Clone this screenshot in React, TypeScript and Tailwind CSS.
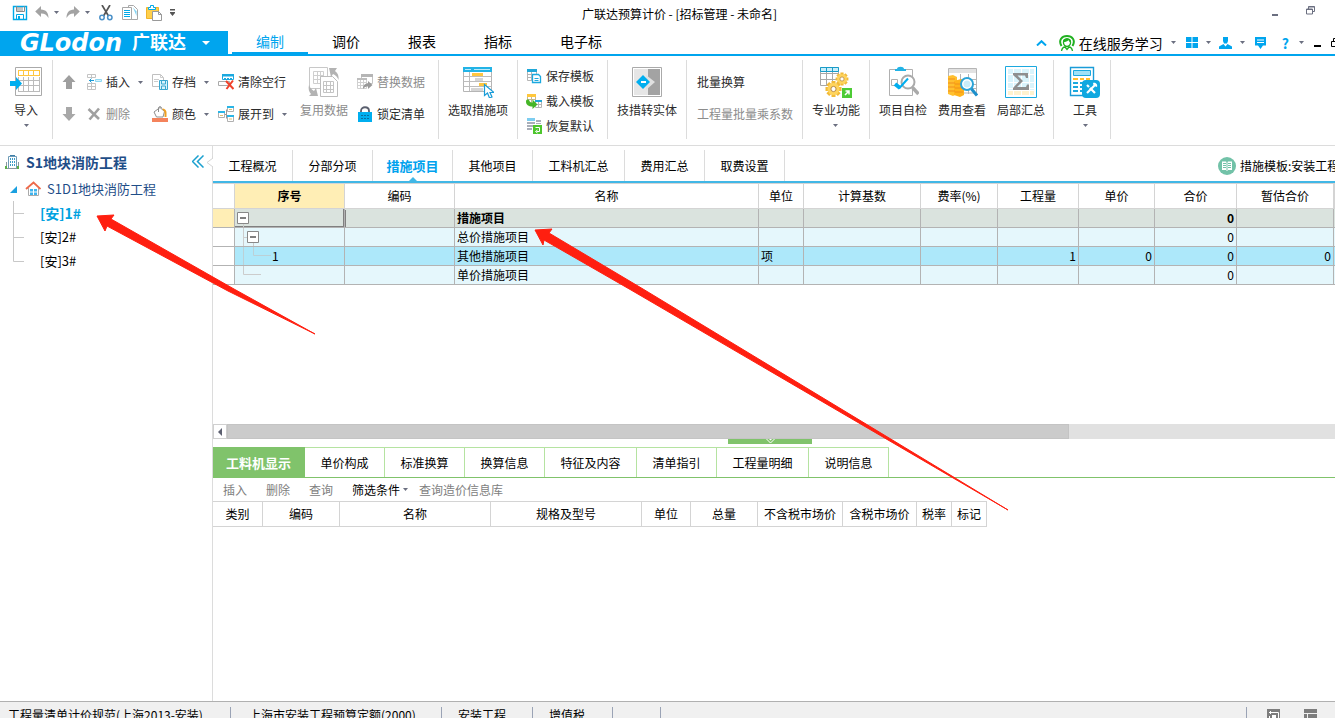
import { useState, type ReactNode } from "react";
import clsx from "clsx";

/* ---------- shared bits ---------- */

function Caret() {
    return (
        <svg width="5" height="3" viewBox="0 0 5 3" className="shrink-0">
            <path d="M0 0h5L2.5 3z" fill="#6b6f80" />
        </svg>
    );
}

function Icon({ size = 16, children }: { size?: number; children: ReactNode }) {
    return (
        <svg width={size} height={size} viewBox={`0 0 ${size} ${size}`} fill="none" className="shrink-0" aria-hidden="true">
            {children}
        </svg>
    );
}

/* ---------- quick access icons ---------- */

const SaveIcon = () => (
    <Icon>
        <path d="M1.5 1.5h13v13h-13z" fill="#fff" stroke="#00a9e8" strokeWidth="1.4" />
        <path d="M4.5 1v5.500h8V1M5 3h6M5 5h6" stroke="#8a8a8a" />
        <path d="M4.500 15V9.500h7V15" stroke="#00a9e8" />
        <path d="M6 11h2v3H6z" fill="#00a9e8" />
    </Icon>
);

const UndoIcon = () => (
    <Icon>
        <path d="M7 1v3.500c5 .2 7.500 3 7.500 8.500C12.500 9.800 10.500 8.500 7 8.600V12L1.200 6.500z" fill="#a3a3a3" />
    </Icon>
);

const RedoIcon = () => (
    <Icon>
        <path d="M9 1v3.500c-5 .2-7.500 3-7.500 8.500C3.500 9.800 5.500 8.500 9 8.600V12l5.800-5.500z" fill="#a3a3a3" />
    </Icon>
);

const CutIcon = () => (
    <Icon>
        <path d="M4 0l6.500 11M12 0L5.500 11" stroke="#555" strokeWidth="1.700" />
        <circle cx="4" cy="12.500" r="2.200" stroke="#4a90c8" strokeWidth="1.500" />
        <circle cx="11.800" cy="12.500" r="2.200" stroke="#4a90c8" strokeWidth="1.500" />
    </Icon>
);

const CopyIcon = () => (
    <Icon>
        <path d="M6.500.5h5l4 4v10h-9z" fill="#fff" stroke="#a8a8a8" />
        <path d="M11 2.500l3.500 4V11z" fill="#7fd2f2" />
        <path d="M.5 2.500h9v12h-9z" fill="#fff" stroke="#a8a8a8" />
        <path d="M2 5.500h6M2 7.500h6M2 9.500h6M2 11.500h6" stroke="#00a9e8" />
    </Icon>
);

const PasteIcon = () => (
    <Icon>
        <path d="M.5 2.500h12v11H.5z" fill="#ffcf4b" stroke="#f0b429" />
        <path d="M2.500 4.500v-2h2v-2h3v2h2v2z" fill="#fff" stroke="#00a9e8" />
        <path d="M6.500 6.500h6l3 3v6h-9z" fill="#fff" stroke="#999" />
        <path d="M12.500 6.500v3h3" stroke="#999" />
    </Icon>
);

/* ---------- ribbon icons, 16px ---------- */

const ArrowUp = () => (
    <Icon>
        <path d="M8 1l6.500 7H11v7H5V8H1.500z" fill="#9f9f9f" />
    </Icon>
);

const ArrowDown = () => (
    <Icon>
        <path d="M8 15l6.500-7H11V1H5v7H1.500z" fill="#a8a8a8" />
    </Icon>
);

const InsertIcon = () => (
    <Icon>
        <path d="M1.500.5h8v3h-8zM5.500.5v3M1.500 9.500h8v6h-8zM5.500 9.500v6M1.500 12.500h8" stroke="#c4c4c4" />
        <path d="M9.500 5.500h6v2h-6z" fill="#d6f3fd" stroke="#8fd8f2" />
        <path d="M3 6.500h5M5.500 4.500L3.500 6.500l2 2" stroke="#1b9ad6" />
    </Icon>
);

const DeleteIcon = () => (
    <Icon>
        <path d="M2.500 3l10.500 10M13 2.500L3.500 13.500" stroke="#a0a0a0" strokeWidth="2.600" />
    </Icon>
);

const ArchiveIcon = () => (
    <Icon>
        <path d="M.5.5h8l3 3v9H.5z" fill="#fff" stroke="#c0c0c0" />
        <path d="M8.500.5v3h3M2 5.500h5M2 7.500h4" stroke="#ccc" />
        <path d="M7.500 6.500h8v9h-8z" fill="#d9f3fc" stroke="#3aa7d0" />
        <path d="M9.500 7v3h4V7M9.500 15v-3h4v3" stroke="#3aa7d0" />
    </Icon>
);

const ColorIcon = () => (
    <Icon>
        <path d="M2 6l6-4.500 4.500 4L11 11H4.500z" fill="#fff" stroke="#8d8d8d" />
        <path d="M6.500 6V2C6.500.2 9.500.2 9.500 2" stroke="#8d8d8d" />
        <path d="M10 2.500c3 0 4.500 2 4.500 4V11h-2V6z" fill="#f0a020" />
        <path d="M0 12h16v4H0z" fill="#f4835c" />
    </Icon>
);

const ClearRowIcon = () => (
    <Icon>
        <path d="M4.500.5h11v5h-11z" fill="#fff" stroke="#1ba9df" />
        <path d="M4 0h12v2.500H4z" fill="#1ba9df" />
        <path d="M6 4.500h2M9 4.500h2M12 4.500h2" stroke="#1ba9df" />
        <path d="M.5 7.500h11v4H.5z" fill="#fff" stroke="#aaa" />
        <path d="M8 7l7.500 8M15 6.500L8.500 15" stroke="#f0412a" strokeWidth="2" />
    </Icon>
);

const ExpandIcon = () => (
    <Icon>
        <path d="M6 8.500h3M8.500 4v8M8.500 3.500H10M8.500 12.500H10" stroke="#999" />
        <path d="M.5 5.500h6v6h-6zM9.500.5h6v5h-6zM9.500 9.500h6v6h-6z" fill="#fff" stroke="#b0b0b0" />
        <path d="M0 5h7v2H0zM9 0h7v2H9zM9 9h7v2H9z" fill="#2ab5e6" />
        <path d="M2 9.500h3M11 3.500h3M11 13h3" stroke="#e0c070" />
    </Icon>
);

const ReplaceIcon = () => (
    <Icon>
        <path d="M4.500.5h11v9h-11z" fill="#fff" stroke="#c4c4c4" />
        <path d="M4 0h12v3H4z" fill="#b5b5b5" />
        <path d="M.5 4.500h9v10h-9zM3.500 4.500v10M6.500 4.500v10M.5 8.500h9M.5 11.500h9" fill="#fff" stroke="#d0d0d0" />
        <path d="M0 4h10v2H0z" fill="#bdbdbd" />
        <path d="M6 15c0-4 2-5.500 5-5.500V7l4.500 4-4.500 4v-2.500c-2 0-3.500.5-5 2.500z" fill="#999" />
    </Icon>
);

const LockIcon = () => (
    <Icon>
        <path d="M4 7V5c0-5 8-5 8 0v2" stroke="#5a5f6e" strokeWidth="1.800" />
        <path d="M1 6h14v10H1z" fill="#00aeef" />
        <path d="M4 9.500h2M7 9.500h2M10 9.500h2M4 12.500h2M7 12.500h2M10 12.500h2" stroke="#0b6fa0" />
    </Icon>
);

const SaveTplIcon = () => (
    <Icon>
        <path d="M1.500 1.500h9v11h-9zM5.500 2v10M1.500 6.500h9M1.500 9.500h9" fill="#fff" stroke="#b5b5b5" />
        <path d="M1 1h10v3H1z" fill="#21a8d8" />
        <path d="M6.500 6.500h6l2 2v6h-8z" fill="#fff" stroke="#1ba9df" strokeWidth="1.300" />
        <path d="M8.500 10.500h4M8.500 12.500h4" stroke="#1ba9df" />
    </Icon>
);

const LoadTplIcon = () => (
    <Icon>
        <path d="M1.500 1.500h8v9h-8zM5.500 2v8M1.500 6.500h8" fill="#fff" stroke="#c8b890" />
        <path d="M1 1h9v3H1z" fill="#ffc73c" />
        <path d="M9.500 7.500h6v7h-6zM12.500 8v6M9.500 11.500h6" fill="#fff" stroke="#b5b5b5" />
        <path d="M9 7h7v2H9z" fill="#21a8d8" />
        <path d="M0 8.500C0 6 3 6 3.500 8c.5 1 1.500 1.500 3 1.500V6.500l5 5-5 4.500v-2.500C2.500 13.500 0 12 0 8.500z" fill="#45b527" />
    </Icon>
);

const RestoreTplIcon = () => (
    <Icon>
        <path d="M1 0h8v3H1z" fill="#7dcdf0" />
        <path d="M1 4h8v2H1zM1 7h6v2H1zM1 10h5v2H1zM10 2h5v2h-5zM10 5h5v1h-5z" fill="#a9aeb8" />
        <path d="M7 7h9v9H7z" fill="#4ec62d" />
        <path d="M9.500 9.500h4v4h-3M11.500 12l-2 1.500 2 1.500" stroke="#fff" />
    </Icon>
);

/* ---------- ribbon icons, 32px ---------- */

const ImportIcon = () => (
    <Icon size={32}>
        <path d="M5.500 1.500h26v28h-26z" fill="#fff" stroke="#aaa" />
        <path d="M8 4.500h22M8 9.500h22M8.500 4v6M13.500 4v6M18.500 4v6M23.500 4v6M29.500 4v6" stroke="#ffc640" />
        <path d="M8 14.500h22M8 19.500h22M8 25.500h22M8.500 11v15M13.500 11v15M18.500 11v15M23.500 11v15M29.500 11v15" stroke="#bbb" />
        <path d="M0 15h6v-4l6 6.500L6 24v-4H0z" fill="#00aeef" />
    </Icon>
);

const ReuseIcon = () => (
    <Icon size={32}>
        <path d="M1.500 1.500h18v21h-18z" fill="#fff" stroke="#c8c8c8" />
        <path d="M5.500 5.500h10v12h-10zM9.500 5.500v12M12.500 5.500v12M5.500 9.500h10M5.500 13.500h10" stroke="#cfcfcf" />
        <path d="M12.500 10.500h12l5 5v15h-17z" fill="#fff" stroke="#bdbdbd" />
        <path d="M15.500 15.500h10v11h-10zM18.500 15.500v11M22.500 15.500v11M15.500 19.500h10M15.500 23.500h10" stroke="#c4c4c4" />
        <path d="M21 2h8l-2 3c3 2 4 5 3.500 9-1-3-3-5-5.500-6l-2 3z" fill="#b3b3b3" />
        <path d="M1 19c1 3 3 5 5 6l2-3 2 8H1l2-2c-2-2-3-5-2-9z" fill="#b3b3b3" />
    </Icon>
);

const PickIcon = () => (
    <Icon size={32}>
        <path d="M1.500 1.500h28v24h-28z" fill="#fff" stroke="#b5b5b5" />
        <path d="M1 1h29v5H1z" fill="#22b3e6" />
        <path d="M3 3.500h6M12 3.500h16" stroke="#bdeafa" />
        <path d="M7.500 6v19M1.500 10.500h28M1.500 15.500h28M1.500 20.500h28" stroke="#bdbdbd" />
        <path d="M10 7h11v3H10zM17 17h8v3h-8z" fill="#ffc640" />
        <path d="M13 12h8v3h-8zM9 22h12v3H9z" fill="#d5d5d5" />
        <path d="M22.500 18.500v11l3-2.500 2 5 2.500-1-2-4.500h4z" fill="#fff" stroke="#1a9cd8" strokeWidth="1.200" />
    </Icon>
);

const SolidIcon = () => (
    <Icon size={32}>
        <path d="M1.500 1.500h29v29h-29z" fill="#fff" stroke="#aaa" />
        <path d="M3 3h14v26H3z" fill="#e6e6e6" />
        <path d="M17 3h12v26H17z" fill="#a3a3a3" />
        <path d="M15 9l9 7-9 8z" fill="#e1e1e1" />
        <path d="M5 16l7-7 7 7-7 7z" fill="#00aeef" />
        <path d="M10 15h5v2h-5z" fill="#fff" />
    </Icon>
);

function Gear({ x, y, s }: { x: number; y: number; s: number }) {
    return (
        <g transform={`translate(${x} ${y}) scale(${s})`}>
            <g stroke="#f2bb38" strokeWidth="4">
                <path d="M0-8V8M-8 0H8M-5.700-5.700L5.700 5.700M-5.700 5.700L5.700-5.700" />
            </g>
            <circle r="6" fill="#ffd45c" />
            <circle r="2.600" fill="#fff" stroke="#b88a4a" />
        </g>
    );
}

const ProIcon = () => (
    <Icon size={32}>
        <path d="M.5 1.500h18v18H.5zM6.500 2v17M12.500 2v17M.5 7.500h18M.5 13.500h18" fill="#fff" stroke="#a8a8a8" />
        <path d="M.5 1.500h18v4H.5zM6.500 2v3M12.500 2v3" fill="#c9effb" stroke="#1a9cc8" />
        <Gear x={22} y={13} s={0.8} />
        <Gear x={13.500} y={23} s={1} />
        <path d="M22 22h10v10H22z" fill="#4dcb35" />
        <path d="M25 29l4-4M25.500 25h3.500v3.500" stroke="#fff" strokeWidth="1.500" />
    </Icon>
);

const CheckIcon = () => (
    <Icon size={32}>
        <path d="M2.500 3.500h23v26h-23z" fill="#fff" stroke="#b0b0b0" />
        <path d="M10 3c0-3 7-3 7 0h2v2H8V3z" fill="#22b3e6" />
        <path d="M4.500 13.500h6v6h-6z" stroke="#b0b0b0" />
        <circle cx="21" cy="16" r="6.500" fill="#fff" stroke="#aaa" strokeWidth="2" />
        <path d="M25.500 21.500l6 6.500" stroke="#aaa" strokeWidth="3.500" />
        <path d="M8 18l5 4" stroke="#00aeef" strokeWidth="4" />
        <path d="M12 22.500l9-10" stroke="#00aeef" strokeWidth="2" />
    </Icon>
);

const FeeIcon = () => (
    <Icon size={32}>
        <path d="M2.500 2.500h28v20h-28zM14.500 8v20M22.500 8v20M14.500 13.500h16M14.500 18.500h16M30.500 22v5h-16" fill="#fff" stroke="#b5b5b5" />
        <path d="M3 3h27v4H3z" fill="#e2e2e2" />
        <path d="M2 10l5-1 4 2v17l-4 2-5-2z" fill="#ffc030" />
        <path d="M8 15l7-2 3 2v14l-4 2-6-2z" fill="#ffb31a" />
        <path d="M2 13h7M2 17h7M2 21h7M2 25h7M9 18h8M9 22h8M9 26h8" stroke="#f08f1c" />
        <circle cx="21" cy="18" r="6" fill="#fff" stroke="#2aa4d8" strokeWidth="2" />
        <circle cx="21" cy="18" r="3.500" fill="#c8edf9" />
        <path d="M25.500 23l5.500 6.500" stroke="#1c8fcb" strokeWidth="3" />
    </Icon>
);

const SumIcon = () => (
    <Icon size={32}>
        <path d="M.5.5h31v31H.5z" fill="#fff" stroke="#1ba9df" />
        <path d="M3 3h26v21H3z" fill="#d9f4fc" />
        <path d="M3 25h26v4H3z" fill="#fff2cf" />
        <path d="M8.500 3v26M16.500 3v26M24.500 3v26M3 8.500h26M3 16.500h26M3 22.500h26" stroke="#fff" />
        <path d="M8 7h15v5h-2l-1-2.500h-7.500L18 15l-6 6h9l1-2.500h2V24H8v-2l6.500-7L8 9z" fill="#8f8f8f" />
    </Icon>
);

const ToolsIcon = () => (
    <Icon size={32}>
        <path d="M1.500 1.500h23v28h-23z" fill="#fff" stroke="#1a9cd8" strokeWidth="1.400" />
        <path d="M4.500 4.500h17v5h-17z" fill="#9fe1f7" stroke="#1ba9df" />
        <path d="M4 17h5M4 21h5M4 25h5M11 17h4M11 21h2M11 25h2" stroke="#1ba9df" strokeWidth="2" />
        <path d="M4 13h5M11 13h4M17 13h4" stroke="#ffbf2e" strokeWidth="2" />
        <rect x="13" y="14" width="18" height="18" rx="4" fill="#10a8e0" />
        <path d="M18 27l8-8" stroke="#fff" strokeWidth="2.200" />
        <path d="M24 17c2-1 5 1 4 4l-2.500-1-1-1z" fill="#fff" />
        <path d="M18 19l2 2M21 22l5 5" stroke="#fff" strokeWidth="2.200" />
    </Icon>
);

/* ---------- ribbon buttons ---------- */

interface ToolProps {
    icon?: ReactNode;
    label: string;
    caret?: boolean;
    disabled?: boolean;
}

function SmallTool({ icon, label, caret, disabled }: ToolProps) {
    return (
        <button disabled={disabled} className={clsx("flex h-full items-center gap-1 whitespace-nowrap", disabled ? "text-[#8c8c8c]" : "text-[#2b2b2b]")}>
            {icon}
            {label}
            {caret && (
                <span className="ml-1 flex">
                    <Caret />
                </span>
            )}
        </button>
    );
}

function BigTool({ icon, label, caret, disabled }: ToolProps) {
    return (
        <button disabled={disabled} className={clsx("flex flex-col items-center whitespace-nowrap pt-1.5", disabled ? "text-[#8c8c8c]" : "text-[#2b2b2b]")}>
            {icon}
            <span className="mt-1 leading-4">{label}</span>
            {caret && (
                <span className="mt-1.5 flex">
                    <Caret />
                </span>
            )}
        </button>
    );
}

function Group({ className, children }: { className: string; children: ReactNode }) {
    return <div className={clsx("mb-1.5 mt-1 flex shrink-0 border-r border-[#dcdcdc]", className)}>{children}</div>;
}

function Pair({ className, children }: { className?: string; children: ReactNode }) {
    return <div className={clsx("mt-1.5 grid h-16 shrink-0 grid-rows-2 justify-start", className)}>{children}</div>;
}

function Ribbon() {
    return (
        <div className="flex h-[90px] shrink-0 overflow-hidden border-b border-[#dcdcdc] leading-4">
            <Group className="w-[53px] justify-center">
                <BigTool icon={<ImportIcon />} label="导入" caret />
            </Group>
            <Group className="w-[386px] pl-2">
                <Pair className="w-[25px]">
                    <button aria-label="上移"><ArrowUp /></button>
                    <button aria-label="下移"><ArrowDown /></button>
                </Pair>
                <Pair className="w-[66px]">
                    <SmallTool icon={<InsertIcon />} label="插入" caret />
                    <SmallTool icon={<DeleteIcon />} label="删除" disabled />
                </Pair>
                <Pair className="w-[66px]">
                    <SmallTool icon={<ArchiveIcon />} label="存档" caret />
                    <SmallTool icon={<ColorIcon />} label="颜色" caret />
                </Pair>
                <Pair className="w-[82px]">
                    <SmallTool icon={<ClearRowIcon />} label="清除空行" />
                    <SmallTool icon={<ExpandIcon />} label="展开到" caret />
                </Pair>
                <BigTool icon={<ReuseIcon />} label="复用数据" disabled />
                <Pair className="ml-[9px]">
                    <SmallTool icon={<ReplaceIcon />} label="替换数据" disabled />
                    <SmallTool icon={<LockIcon />} label="锁定清单" />
                </Pair>
            </Group>
            <Group className="w-[79px] justify-center">
                <BigTool icon={<PickIcon />} label="选取措施项" />
            </Group>
            <Group className="w-[90px] pl-2">
                <div className="mt-[3px] grid h-[75px] grid-rows-3">
                    <SmallTool icon={<SaveTplIcon />} label="保存模板" />
                    <SmallTool icon={<LoadTplIcon />} label="载入模板" />
                    <SmallTool icon={<RestoreTplIcon />} label="恢复默认" />
                </div>
            </Group>
            <Group className="w-[79px] justify-center">
                <BigTool icon={<SolidIcon />} label="技措转实体" />
            </Group>
            <Group className="w-[116px] pl-2.5">
                <Pair>
                    <SmallTool label="批量换算" />
                    <SmallTool label="工程量批量乘系数" disabled />
                </Pair>
            </Group>
            <Group className="w-[67px] justify-center">
                <BigTool icon={<ProIcon />} label="专业功能" caret />
            </Group>
            <Group className="w-[184px] gap-[11px] pl-[9px]">
                <BigTool icon={<CheckIcon />} label="项目自检" />
                <BigTool icon={<FeeIcon />} label="费用查看" />
                <BigTool icon={<SumIcon />} label="局部汇总" />
            </Group>
            <Group className="w-[57px] justify-center pl-1.5">
                <BigTool icon={<ToolsIcon />} label="工具" caret />
            </Group>
        </div>
    );
}

/* ---------- title bar and menu ---------- */

function TitleBar() {
    return (
        <header className="relative flex h-[31px] shrink-0 items-center justify-between pb-1.5 pl-3 pr-5">
            <div className="flex items-center">
                <button aria-label="保存"><SaveIcon /></button>
                <button aria-label="撤销" className="ml-1.5 flex items-center gap-1"><UndoIcon /><Caret /></button>
                <button aria-label="重做" className="ml-1.5 flex items-center gap-1"><RedoIcon /><Caret /></button>
                <button aria-label="剪切" className="ml-2"><CutIcon /></button>
                <button aria-label="复制" className="ml-2"><CopyIcon /></button>
                <button aria-label="粘贴" className="ml-2"><PasteIcon /></button>
                <button aria-label="更多" className="ml-2">
                    <svg width="5" height="7" viewBox="0 0 5 7">
                        <path d="M0 0h5v1.500H0zM0 3h5v1L2.500 7 0 4z" fill="#555" />
                    </svg>
                </button>
            </div>
            <h1 className="absolute inset-x-0 top-1.5 mx-auto w-fit pl-6 text-xs leading-4 text-black">广联达预算计价 - [招标管理 - 未命名]</h1>
            <div className="flex items-center gap-7">
                <button aria-label="最小化" className="pt-1">
                    <svg width="6" height="2" viewBox="0 0 6 2"><path d="M0 0h6v2H0z" fill="#6b6f80" /></svg>
                </button>
                <button aria-label="还原" className="pb-1">
                    <svg width="9" height="9" viewBox="0 0 9 9" fill="none" stroke="#6b6f80">
                        <path d="M2.500 3V.5h6v5H6M.5 3h6v5h-6zM.5 3.500h6M2.500 1h6" />
                    </svg>
                </button>
            </div>
        </header>
    );
}

const MENUS = ["编制", "调价", "报表", "指标"];

function MenuBar() {
    return (
        <nav className="flex h-[25px] shrink-0 overflow-hidden border-b-2 border-[#00a5ee] text-sm leading-5">
            <button className="flex w-[228px] shrink-0 items-center bg-[#00a5ee] pl-2.5 text-white">
                <span className="w-[122px] text-center text-2xl font-bold italic leading-6 [font-family:'DejaVu_Sans',sans-serif]">GLodon</span>
                <span className="pb-1 text-lg font-bold leading-5">广联达</span>
                <svg width="8" height="4" viewBox="0 0 8 4" className="ml-4"><path d="M0 0h8L4 4z" fill="#fff" /></svg>
            </button>
            <div className="ml-1 flex">
                {MENUS.map((m, i) => (
                    <button key={m} className={clsx("w-[76px] shrink-0 border-b-2 pb-0.5", i === 0 ? "border-[#00a5ee] text-[#00a5ee]" : "border-transparent text-black")}>
                        {m}
                    </button>
                ))}
                <button className="w-[90px] shrink-0 border-b-2 border-transparent pb-0.5 text-black">电子标</button>
            </div>
            <div className="ml-auto flex shrink-0 items-center">
                <button aria-label="收起功能区" className="mr-3">
                    <svg width="11" height="6" viewBox="0 0 11 6" fill="none"><path d="M1 5.500L5.500 1.200 10 5.500" stroke="#00a5ee" strokeWidth="2" /></svg>
                </button>
                <button className="flex items-center gap-1 whitespace-nowrap text-black">
                    <Icon>
                        <path d="M2.500 11C-1 5 3 1 8 1s9 4 5.500 10" stroke="#20b020" strokeWidth="2" />
                        <path d="M4.500 8V7c0-4 7-4 7 0v1c0 2-2 3.500-3.500 3.500S4.500 10 4.500 8z" fill="#fff" stroke="#20b020" strokeWidth="1.300" />
                        <path d="M4.500 7c2 0 4-.5 5-2 .5 1.500 1 2 2 2V5L8 3 4.500 5z" fill="#20b020" />
                        <path d="M2.500 16c.5-2.500 2-4 3.500-4l2 2.500L10 12c1.500 0 3 1.500 3.500 4" stroke="#20b020" strokeWidth="1.300" />
                    </Icon>
                    在线服务学习
                    <span className="ml-1 flex"><Caret /></span>
                </button>
                <button aria-label="应用" className="ml-2.5 flex items-center gap-2">
                    <svg width="12" height="11" viewBox="0 0 12 11"><path d="M0 0h5.500v5H0zM6.500 0H12v5H6.500zM0 6h5.500v5H0zM6.500 6H12v5H6.500z" fill="#00a5ee" /></svg>
                    <Caret />
                </button>
                <button aria-label="用户" className="ml-2 flex items-center gap-2">
                    <svg width="13" height="12" viewBox="0 0 13 12"><path d="M4 0h5v4L8 6.500H5L4 4z" fill="#00a5ee" /><path d="M0 12V9.500L4.500 7l2 2.500L8.500 7 13 9.500V12z" fill="#00a5ee" /></svg>
                    <Caret />
                </button>
                <button aria-label="消息" className="ml-2.5">
                    <svg width="11" height="12" viewBox="0 0 11 12"><path d="M0 0h11v8.500H8L5.500 12 3 8.500H0z" fill="#00a5ee" /><path d="M2 3h7M2 5.500h7" stroke="#fff" /></svg>
                </button>
                <button aria-label="帮助" className="ml-4 flex items-center gap-2.5 font-bold text-[#00a5ee]">
                    ?
                    <Caret />
                </button>
                <button aria-label="最小化窗口" className="ml-2.5 pt-1.5">
                    <svg width="7" height="2" viewBox="0 0 7 2"><path d="M0 0h7v2H0z" fill="#000" /></svg>
                </button>
                <button aria-label="还原窗口" className="ml-2.5 w-1 overflow-hidden">
                    <svg width="9" height="9" viewBox="0 0 9 9" fill="none" stroke="#000" className="max-w-none"><path d="M2.500 3V.5h6v5H6M.5 3.500h6v5h-6z" /></svg>
                </button>
            </div>
        </nav>
    );
}

/* ---------- project tree ---------- */

const UNITS = ["[安]1#", "[安]2#", "[安]3#"];

function Sidebar() {
    const [unit, setUnit] = useState(0);
    return (
        <aside className="relative w-[213px] shrink-0 border-r border-[#dcdcdc] text-[13px] leading-5">
            <div className="flex h-[31px] items-center pl-1 pr-2">
                <Icon>
                    <path d="M4.500 2.500h8v12h-8z" fill="#fff" stroke="#6f9cb8" />
                    <path d="M6 1.500h5" stroke="#3d7ea8" />
                    <path d="M6.500 4v9M8.500 4v9M10.500 4v9" stroke="#3d9bc8" strokeDasharray="2 1" />
                    <path d="M2.500 8v6M14.500 8v6M1 14.500h14" stroke="#8a979f" />
                    <path d="M1 12h2v3H1zM13 12h2v3h-2z" fill="#5cb04a" />
                </Icon>
                <h2 className="ml-1.5 text-sm font-bold text-[#1f4e88]">S1地块消防工程</h2>
                <button aria-label="折叠" className="ml-auto">
                    <svg width="12" height="13" viewBox="0 0 12 13" fill="none" stroke="#1ba0cf" strokeWidth="1.500"><path d="M6.500.5l-6 6 6 6M11.500.5l-6 6 6 6" /></svg>
                </button>
            </div>
            <button className="flex h-6 items-center pl-2.5 text-[#1f4e88]">
                <svg width="7" height="7" viewBox="0 0 7 7"><path d="M7 0v7H0z" fill="#1ba0e0" /></svg>
                <svg width="16" height="16" viewBox="0 0 16 16" fill="none" className="ml-2">
                    <path d="M3.500 7v7.500h10V7" fill="#fff" stroke="#aaa" />
                    <path d="M1 8l7.500-6.500L15.500 8" stroke="#ee6a4a" strokeWidth="1.800" />
                    <path d="M5 8h3v2.500H5zM9 8h3v2.500H9zM5 11.500h3V14H5zM9 11.500h3V14H9z" fill="#3fb4ee" />
                </svg>
                <span className="ml-1.5">S1D1地块消防工程</span>
            </button>
            <ul className="pl-[13px]">
                {UNITS.map((u, i) => (
                    <li key={u} className="flex h-6">
                        <svg width="12" height="24" viewBox="0 0 12 24" fill="none" stroke="#c8c8c8">
                            <path d={i === UNITS.length - 1 ? "M.5 0v12.500H11" : "M.5 0v24M.5 12.500H11"} />
                        </svg>
                        <button onClick={() => setUnit(i)} className={clsx("ml-[15px]", i === unit ? "text-sm font-bold text-[#00a2e0]" : "text-black")}>
                            {u}
                        </button>
                    </li>
                ))}
            </ul>
            <svg width="7" height="13" viewBox="0 0 7 13" className="absolute -right-px top-2.5"><path d="M7 0v2L1 6.500 7 11v2" fill="#fff" stroke="#d4d4d4" /></svg>
        </aside>
    );
}

/* ---------- main grid ---------- */

const TABS = ["工程概况", "分部分项", "措施项目", "其他项目", "工料机汇总", "费用汇总", "取费设置"];

const HEADERS = ["", "序号", "编码", "名称", "单位", "计算基数", "费率(%)", "工程量", "单价", "合价", "暂估合价", ""];

const ROWS = [
    { no: "", name: "措施项目", unit: "", qty: "", price: "", total: "0", est: "", bg: "bg-[#dae3de]", bold: true },
    { no: "", name: "总价措施项目", unit: "", qty: "", price: "", total: "0", est: "", bg: "bg-[#e5f7fc]", bold: false },
    { no: "1", name: "其他措施项目", unit: "项", qty: "1", price: "0", total: "0", est: "0", bg: "bg-[#ade8fa]", bold: false },
    { no: "", name: "单价措施项目", unit: "", qty: "", price: "", total: "0", est: "", bg: "bg-[#e5f7fc]", bold: false },
];

// connector lines and the minus boxes in the first column, one drawing per row
const BRANCHES = [
    <g key="0">
        <path d="M8.500 14v5" stroke="#ccc" />
        <path d="M2.500 3.500h11v11h-11z" fill="#fff" stroke="#888" />
        <path d="M5 9h6" stroke="#000" />
    </g>,
    <g key="1">
        <path d="M8.500 0v19M8.500 9.500H12M18.500 14v5" stroke="#ccc" />
        <path d="M12.500 3.500h11v11h-11z" fill="#fff" stroke="#888" />
        <path d="M15 9h6" stroke="#000" />
    </g>,
    <path key="2" d="M8.500 0v19M18.500 0v8.500H36" stroke="#bcd0d6" />,
    <path key="3" d="M8.500 0v8.500H26" stroke="#ccc" />,
];

function MeasureTable() {
    return (
        <table className="w-full min-w-[1122px] table-fixed border-separate border-spacing-0 text-xs leading-[18px] text-black">
            <colgroup>
                <col className="w-[22px]" />
                <col className="w-[110px]" />
                <col className="w-[110px]" />
                <col className="w-[304px]" />
                <col className="w-[45px]" />
                <col className="w-[117px]" />
                <col className="w-[77px]" />
                <col className="w-[81px]" />
                <col className="w-[76px]" />
                <col className="w-[82px]" />
                <col className="w-[97px]" />
                <col />
            </colgroup>
            <thead>
                <tr className="h-[26px]">
                    {HEADERS.map((h, i) => (
                        <th key={i} className={clsx("border-b border-r border-t border-[#d4d4d4] p-0", i === 1 ? "bg-[#ffeeb5] font-bold" : "font-normal")}>
                            {h}
                        </th>
                    ))}
                </tr>
            </thead>
            <tbody className="[&_td]:h-[19px] [&_td]:border-b [&_td]:border-r [&_td]:border-[#b3b3b3] [&_td]:px-0.5 [&_td]:py-0 [&_td:last-child]:border-r-0">
                {ROWS.map((r, i) => (
                    <tr key={r.name} className={clsx(r.bg, r.bold && "font-bold")}>
                        <td className={i === 0 ? "bg-[#ffeeb5]" : "bg-white"} />
                        <td className={clsx(i === 0 && "shadow-[1px_1px_0_#808080,inset_-1px_-1px_0_#808080]")}>
                            <div className="-ml-0.5 flex">
                                <svg width="37" height="18" viewBox="0 0 37 18" fill="none">{BRANCHES[i]}</svg>
                                {r.no}
                            </div>
                        </td>
                        <td />
                        <td>{r.name}</td>
                        <td>{r.unit}</td>
                        <td />
                        <td />
                        <td className="text-right">{r.qty}</td>
                        <td className="text-right">{r.price}</td>
                        <td className="text-right">{r.total}</td>
                        <td className="text-right">{r.est}</td>
                        <td />
                    </tr>
                ))}
            </tbody>
        </table>
    );
}

function MainTabs() {
    const [tab, setTab] = useState(2);
    return (
        <div className="flex h-[37px] shrink-0 overflow-hidden border-b-2 border-[#41b7e6] pt-1 text-xs leading-4">
            {TABS.map((t, i) => (
                <button
                    key={t}
                    onClick={() => setTab(i)}
                    className={clsx(
                        "relative shrink-0 border-r border-[#dcdcdc]",
                        t.length > 4 ? "w-[92px]" : "w-20",
                        i === tab ? "text-[13px] font-bold text-[#00a2ee]" : "text-black",
                    )}
                >
                    {t}
                    {i === tab && (
                        <svg width="8" height="4" viewBox="0 0 8 4" className="absolute inset-x-0 bottom-0 mx-auto"><path d="M4 0l4 4H0z" fill="#41b7e6" /></svg>
                    )}
                </button>
            ))}
            <button className="ml-auto flex w-[117px] shrink-0 items-center gap-1 overflow-hidden whitespace-nowrap text-black">
                <Icon size={18}>
                    <circle cx="9" cy="9" r="9" fill="#72c2a8" />
                    <path d="M4 4.500h4l1 1 1-1h4v8.500h-4l-1 1-1-1H4z" fill="#fff" />
                    <path d="M5 6.500h3M5 8.500h3M5 10.500h3M10 6.500h3M10 8.500h3M10 10.500h3M9 5v8" stroke="#72c2a8" />
                </Icon>
                措施模板:安装工程
            </button>
        </div>
    );
}

/* ---------- detail panel ---------- */

const DETAIL_TABS = ["工料机显示", "单价构成", "标准换算", "换算信息", "特征及内容", "清单指引", "工程量明细", "说明信息"];

const DETAIL_COLS = [
    { label: "类别", w: "w-[50px]" },
    { label: "编码", w: "w-[77px]" },
    { label: "名称", w: "w-[151px]" },
    { label: "规格及型号", w: "w-[151px]" },
    { label: "单位", w: "w-[49px]" },
    { label: "总量", w: "w-[67px]" },
    { label: "不含税市场价", w: "w-[85px]" },
    { label: "含税市场价", w: "w-[74px]" },
    { label: "税率", w: "w-[35px]" },
    { label: "标记", w: "w-[35px]" },
];

function DetailPanel() {
    const [tab, setTab] = useState(0);
    return (
        <section className="h-[262px] shrink-0 text-xs leading-4">
            <div className="flex h-2 items-start justify-center pr-2">
                <button aria-label="收起面板" className="flex h-[5px] w-[84px] justify-center bg-[#80c36b]">
                    <svg width="9" height="5" viewBox="0 0 9 5" fill="none" stroke="#fff"><path d="M.5 0l4 4 4-4" /><path d="M3 0h3L4.500 1.500z" fill="#fff" stroke="none" /></svg>
                </button>
            </div>
            <div className="flex h-[31px] border-b border-[#80c36b]">
                {DETAIL_TABS.map((t, i) => (
                    <button
                        key={t}
                        onClick={() => setTab(i)}
                        className={clsx(
                            "shrink-0 border-r border-t",
                            t.length > 4 ? "w-[92px]" : "w-20",
                            i === tab ? "border-[#80c36b] bg-[#80c36b] text-[13px] font-bold text-white" : "border-[#b5e3a1] text-black",
                        )}
                    >
                        {t}
                    </button>
                ))}
            </div>
            <div className="flex h-[23px] items-center gap-[19px] pl-2.5 text-[#808080]">
                <button>插入</button>
                <button>删除</button>
                <button>查询</button>
                <button className="flex items-center gap-[3px] text-black">筛选条件<Caret /></button>
                <button className="-ml-2">查询造价信息库</button>
            </div>
            <table className="w-[774px] table-fixed border-separate border-spacing-0 text-black">
                <thead>
                    <tr className="h-[26px]">
                        {DETAIL_COLS.map((c) => (
                            <th key={c.label} className={clsx("whitespace-nowrap border-b border-r border-t border-[#d4d4d4] p-0 font-normal", c.w)}>
                                {c.label}
                            </th>
                        ))}
                    </tr>
                </thead>
            </table>
        </section>
    );
}

function StatusBar() {
    return (
        <footer className="h-[17px] shrink-0 overflow-hidden border-t border-[#b0b0b0] bg-[#f0f0f0] text-xs leading-4 text-black">
            <div className="flex h-6 items-center whitespace-nowrap pt-0.5 *:h-4 *:shrink-0 *:border-r *:border-[#9aa3b5]">
                <span className="w-[231px] pl-2">工程量清单计价规范(上海2013-安装)</span>
                <span className="w-[211px] pl-[18px]">上海市安装工程预算定额(2000)</span>
                <span className="w-[91px] pl-4">安装工程</span>
                <span className="w-20 pl-4">增值税</span>
                <span className="w-12" />
                <span className="min-w-0 flex-1" />
                <span className="flex w-[88px] gap-6 border-none pl-5 pt-0.5">
                    <svg width="13" height="13" viewBox="0 0 13 13"><path d="M0 0h13v13H0z" fill="#7d7d7d" /><path d="M2 3.500h9.500V11M3.500 2v3M2.500 7v4" stroke="#fff" fill="none" /><path d="M5 6h4v3H5z" fill="#fff" /></svg>
                    <svg width="13" height="13" viewBox="0 0 13 13"><path d="M0 0h13v4H0zM0 5h3v8H0zM4 5h9v8H4z" fill="#7d7d7d" /></svg>
                </span>
            </div>
        </footer>
    );
}

// red pointers laid over the window
function Pointers() {
    return (
        <svg className="pointer-events-none absolute left-0 top-0" width="1010" height="512" viewBox="0 0 1010 512" aria-hidden="true">
            <g fill="#ff1f10" stroke="#ff1f10" strokeLinejoin="round">
                <path d="M97 216l17-1-3 4 123 70 81 45-87-43L107 226l-2 5z" />
                <path d="M535 230l17-1-3 4 94 56 365 221L631 290l-87-50-1 5z" />
            </g>
        </svg>
    );
}

export default function App() {
    return (
        <div className="relative flex h-screen flex-col overflow-hidden bg-white text-xs [font-family:'Noto_Sans_CJK_SC',sans-serif]">
            <TitleBar />
            <MenuBar />
            <Ribbon />
            <div className="flex min-h-0 flex-1">
                <Sidebar />
                <main className="flex min-w-0 flex-1 flex-col">
                    <MainTabs />
                    <div className="min-h-0 flex-1 overflow-hidden">
                        <MeasureTable />
                    </div>
                    <div className="flex h-[15px] shrink-0 bg-[#e1e1e1]">
                        <button aria-label="向左滚动" className="flex w-3.5 items-center justify-center border border-[#d0d0d0] bg-white">
                            <svg width="4" height="8" viewBox="0 0 4 8"><path d="M4 0v8L0 4z" fill="#5d6070" /></svg>
                        </button>
                        <div className="w-3/4 border border-[#c4c4c4] bg-[#cbcbcb]" />
                    </div>
                    <DetailPanel />
                </main>
            </div>
            <StatusBar />
            <Pointers />
        </div>
    );
}
